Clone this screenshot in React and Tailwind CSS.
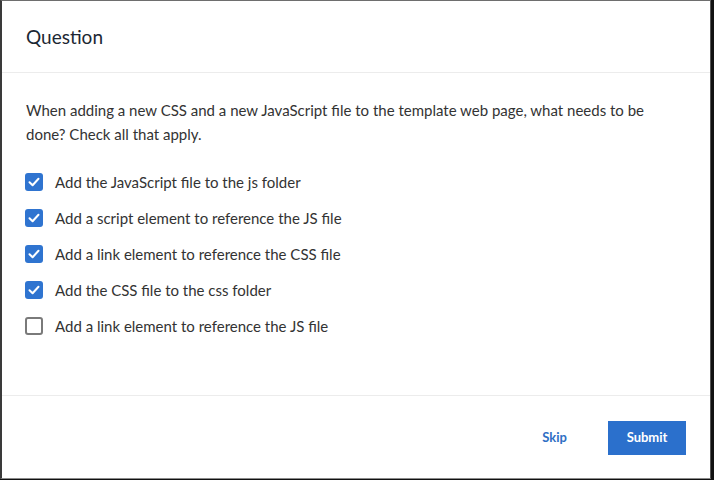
import { useState } from 'react';

const options = [
  { id: 1, label: 'Add the JavaScript file to the js folder', checked: true },
  { id: 2, label: 'Add a script element to reference the JS file', checked: true },
  { id: 3, label: 'Add a link element to reference the CSS file', checked: true },
  { id: 4, label: 'Add the CSS file to the css folder', checked: true },
  { id: 5, label: 'Add a link element to reference the JS file', checked: false },
];

function Box({ checked }) {
  if (checked) {
    return (
      <span className="w-[18px] h-[18px] rounded-[3px] bg-[#2f74d0] flex items-center justify-center shrink-0">
        <svg width="14" height="14" viewBox="0 0 14 14" fill="none">
          <path d="M2.5 7.2 L5.6 10.2 L11.5 3.8" stroke="white" strokeWidth="2" strokeLinecap="round" strokeLinejoin="round" />
        </svg>
      </span>
    );
  }
  return <span className="w-[18px] h-[18px] rounded-[3px] border-2 border-[#7a7a7a] bg-white shrink-0" />;
}

export default function App() {
  const [items, setItems] = useState(options);

  const toggle = (id) => {
    setItems(items.map(o => (o.id === id ? { ...o, checked: !o.checked } : o)));
  };

  return (
    <div className="w-[714px] h-[480px] bg-[#111] font-['Lato',sans-serif]">
      <div className="w-[711px] h-[479px] bg-white border-t border-t-[#6e6e6e] border-l-2 border-l-[#3a3a3a] border-r border-r-[#555] border-b border-b-[#8a8a8a] flex flex-col">
        <div className="h-[72px] border-b border-[#ececec] flex items-center pl-6 pt-[2px]">
          <h1 className="text-[19px] text-[#1c2733]">Question</h1>
        </div>

        <div className="flex-1 pl-6 pr-6 pt-[25px]">
          <p className="text-[15px] leading-6 text-[#333]">
            When adding a new CSS and a new JavaScript file to the template web page, what needs to be done? Check all that apply.
          </p>
          <div className="mt-[27px] flex flex-col gap-[18px]">
            {items.map(o => (
              <label key={o.id} className="flex items-center gap-3 cursor-pointer h-[18px] -ml-px" onClick={() => toggle(o.id)}>
                <Box checked={o.checked} />
                <span className="text-[15px] text-[#333]">{o.label}</span>
              </label>
            ))}
          </div>
        </div>

        <div className="h-[83px] border-t border-[#ececec] flex items-center justify-end pr-[24px] pt-[2px] gap-[41px]">
          <button className="text-[13px] font-bold text-[#2f6fc4]">Skip</button>
          <button className="w-[78px] h-[34px] bg-[#2b70cc] text-white text-[13px] font-bold">Submit</button>
        </div>
      </div>
    </div>
  );
}
